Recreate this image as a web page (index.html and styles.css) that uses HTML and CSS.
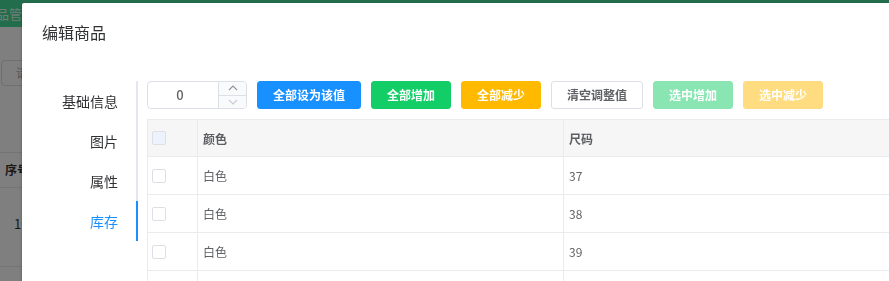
FILE: index.html
```html
<!DOCTYPE html>
<html lang="zh-CN">
<head>
<meta charset="utf-8">
<title>编辑商品</title>
<link rel="stylesheet" href="styles.css">
</head>
<body>
<div class="page">
  <div class="page-header"><span class="page-title">品管理</span></div>
  <div class="page-main">
    <div class="page-input">请输入</div>
    <div class="page-table">
      <div class="page-th">序号</div>
      <div class="page-td">1</div>
    </div>
  </div>
</div>
<div class="mask"></div>
<div class="dialog">
  <div class="dialog-header">编辑商品</div>
  <div class="dialog-body">
    <div class="tabs">
      <div class="tabs-nav">
        <div class="tab">基础信息</div>
        <div class="tab">图片</div>
        <div class="tab">属性</div>
        <div class="tab active">库存</div>
      </div>
      <div class="tabs-content">
        <div class="toolbar">
          <div class="num-input">
            <div class="num-value">0</div>
            <div class="num-controls">
              <div class="num-up"><svg width="10" height="6" viewBox="0 0 10 6"><polyline points="1,5 5,1 9,5" fill="none" stroke="#909399" stroke-width="1.1"/></svg></div>
              <div class="num-down"><svg width="10" height="6" viewBox="0 0 10 6"><polyline points="1,1 5,5 9,1" fill="none" stroke="#c8cbd2" stroke-width="1.1"/></svg></div>
            </div>
          </div>
          <button class="btn btn-primary">全部设为该值</button>
          <button class="btn btn-success">全部增加</button>
          <button class="btn btn-warning">全部减少</button>
          <button class="btn btn-default">清空调整值</button>
          <button class="btn btn-success-dis">选中增加</button>
          <button class="btn btn-warning-dis">选中减少</button>
        </div>
        <div class="table">
          <div class="th"><span class="checkbox disabled"></span></div>
          <div class="th">颜色</div>
          <div class="th">尺码</div>

          <div class="td"><span class="checkbox"></span></div>
          <div class="td">白色</div>
          <div class="td">37</div>

          <div class="td"><span class="checkbox"></span></div>
          <div class="td">白色</div>
          <div class="td">38</div>

          <div class="td"><span class="checkbox"></span></div>
          <div class="td">白色</div>
          <div class="td">39</div>

          <div class="td"><span class="checkbox"></span></div>
          <div class="td">白色</div>
          <div class="td">40</div>
        </div>
      </div>
    </div>
  </div>
</div>
</body>
</html>
```
FILE: styles.css
```css
* { box-sizing: border-box; }
html, body {
  margin: 0;
  height: 100%;
  overflow: hidden;
}
body {
  font-family: "Noto Sans CJK SC", "Noto Sans", sans-serif;
  background: #fff;
  color: #303133;
}

/* background page */
.page-header {
  height: 27px;
  background: #44dc98;
  color: rgba(255,255,255,0.85);
  font-size: 13px;
  line-height: 27px;
  white-space: nowrap;
  overflow: hidden;
}
.page-title {
  display: inline-block;
  margin-left: -4px;
}
.page-main {
  padding: 33px 0 0 1px;
}
.page-input {
  width: 200px;
  height: 26px;
  border: 1px solid #dcdfe6;
  border-radius: 4px;
  padding-left: 14px;
  font-size: 12px;
  line-height: 24px;
  color: #a0a4ac;
}
.page-table {
  margin-top: 66px;
  margin-left: -1px;
  width: 300px;
  border-top: 1px solid #e6e8ec;
}
.page-th {
  height: 35px;
  line-height: 34px;
  font-size: 12px;
  font-weight: bold;
  color: #303133;
  padding-left: 5px;
  border-bottom: 1px solid #e6e8ec;
}
.page-td {
  height: 79px;
  line-height: 72px;
  font-size: 13px;
  color: #303133;
  padding-left: 14px;
  border-bottom: 1px solid #e6e8ec;
}

.mask {
  position: fixed;
  inset: 0;
  background: rgba(0,0,0,0.5);
}

/* dialog */
.dialog {
  position: absolute;
  top: 3px;
  left: 22px;
  width: 1000px;
  height: 400px;
  background: #fff;
  border-radius: 2px;
  box-shadow: 0 1px 3px rgba(0,0,0,0.3);
}
.dialog-header {
  padding: 17px 20px 10px;
  font-size: 16px;
  line-height: 24px;
  color: #303133;
}
.dialog-body {
  padding: 27px 20px 0;
}
.tabs {
  display: flex;
  align-items: flex-start;
}
.tabs-nav {
  flex: none;
  width: 96px;
  margin-right: 9px;
  border-right: 2px solid #e4e7ed;
}
.tab {
  height: 40px;
  line-height: 40px;
  padding: 0 18px 0 20px;
  text-align: right;
  font-size: 14px;
  color: #303133;
  white-space: nowrap;
}
.tab.active {
  color: #1890ff;
  margin-right: -2px;
  border-right: 2px solid #1890ff;
  padding-right: 18px;
}
.tabs-content {
  flex: 1;
  min-width: 0;
}
.toolbar {
  display: flex;
  gap: 10px;
  height: 28px;
}
.num-input {
  flex: none;
  width: 100px;
  height: 28px;
  border: 1px solid #dcdfe6;
  border-radius: 4px;
  display: flex;
  overflow: hidden;
}
.num-value {
  flex: 1;
  text-align: center;
  font-size: 13px;
  font-weight: 500;
  line-height: 26px;
  color: #606266;
  padding-right: 6px;
}
.num-controls {
  width: 28px;
  border-left: 1px solid #dcdfe6;
  display: flex;
  flex-direction: column;
  background: #f9fafc;
}
.num-up, .num-down {
  flex: 1;
  display: flex;
  align-items: center;
  justify-content: center;
}
.num-up {
  border-bottom: 1px solid #dcdfe6;
}
.btn {
  flex: none;
  height: 28px;
  padding: 0 15px;
  border: 1px solid transparent;
  border-radius: 3px;
  font-family: inherit;
  font-size: 12px;
  font-weight: bold;
  color: #fff;
  line-height: 26px;
  white-space: nowrap;
}
.btn-primary { background: #1890ff; border-color: #1890ff; }
.btn-success { background: #13ce66; border-color: #13ce66; }
.btn-warning { background: #ffba00; border-color: #ffba00; }
.btn-default { background: #fff; border-color: #dcdfe6; color: #606266; }
.btn-success-dis { background: #89e6b2; border-color: #89e6b2; }
.btn-warning-dis { background: #ffdc7f; border-color: #ffdc7f; }

.table {
  margin-top: 10px;
  display: grid;
  grid-template-columns: 50px 366px 500px;
  border-top: 1px solid #e9ebee;
  border-left: 1px solid #e9ebee;
}
.th, .td {
  display: flex;
  align-items: center;
  padding-left: 5px;
  border-right: 1px solid #e9ebee;
  border-bottom: 1px solid #e9ebee;
  font-size: 12px;
  color: #606266;
}
.th {
  height: 37px;
  background: #f6f6f6;
  font-weight: bold;
  color: #5c5e62;
}
.td {
  height: 38px;
}
.th:first-child, .td:nth-child(3n+1) {
  padding-left: 4px;
}
.checkbox {
  width: 14px;
  height: 14px;
  border: 1px solid #dcdfe6;
  border-radius: 2px;
  background: #fff;
}
.checkbox.disabled {
  background: #edf2fc;
}
```
